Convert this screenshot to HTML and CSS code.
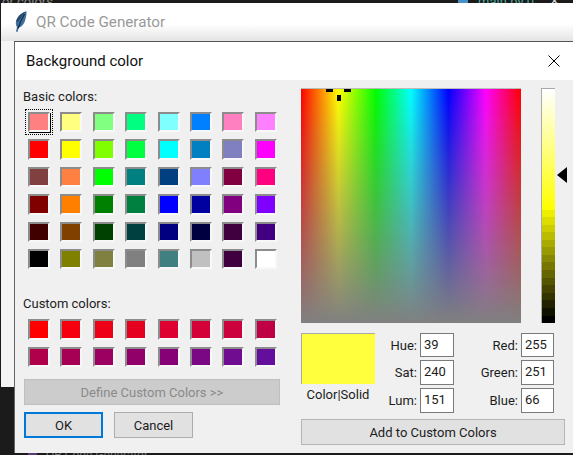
FILE: index.html
```html
<!DOCTYPE html>
<html lang="en">
<head>
<meta charset="utf-8">
<title>Background color</title>
<link rel="stylesheet" href="styles.css">
</head>
<body>
<div class="desk-top"><span class="desk-left">or colors</span><i class="desk-icon"></i><span class="desk-right">main.py 0</span><span class="desk-x">×</span></div>
<div class="parent">
  <div class="parent-title">
    <svg class="feather" width="12" height="22" viewBox="0 0 12 22"><path d="M11.5 0.5C7 1 2.5 5 1 10.5C0.5 13 1 15 2 16L1 20.5L2.6 21L3.6 16.8C7 16 9.5 12.5 10.5 8C11.2 5 11.8 2.5 11.5 0.5Z" fill="#3f6f9c"/><path d="M9.5 3C7 7 5 11.5 3 17.5" stroke="#12263c" stroke-width="1.2" fill="none"/><path d="M11.5 0.5C9.5 1.5 7.5 3.5 6 6L3 11L1.2 10C3 5 7 1.5 11.5 0.5Z" fill="#23466a"/></svg>
    <span>QR Code Generator</span>
  </div>
</div>
<div class="dialog">
  <div class="dialog-title">
    <span>Background color</span>
    <svg class="close" width="12" height="12" viewBox="0 0 12 12"><path d="M0.5 0.5L11.5 11.5M11.5 0.5L0.5 11.5" stroke="#000" stroke-width="1" fill="none"/></svg>
  </div>
  <div class="dialog-body">
    <div class="left">
      <div class="label basic-label">Basic colors:</div>
      <div class="swatches">
        <div class="swatch selected" style="background:#ff8080"></div><div class="swatch" style="background:#ffff80"></div><div class="swatch" style="background:#80ff80"></div><div class="swatch" style="background:#00ff80"></div><div class="swatch" style="background:#80ffff"></div><div class="swatch" style="background:#0080ff"></div><div class="swatch" style="background:#ff80c0"></div><div class="swatch" style="background:#ff80ff"></div>
        <div class="swatch" style="background:#ff0000"></div><div class="swatch" style="background:#ffff00"></div><div class="swatch" style="background:#80ff00"></div><div class="swatch" style="background:#00ff40"></div><div class="swatch" style="background:#00ffff"></div><div class="swatch" style="background:#0080c0"></div><div class="swatch" style="background:#8080c0"></div><div class="swatch" style="background:#ff00ff"></div>
        <div class="swatch" style="background:#804040"></div><div class="swatch" style="background:#ff8040"></div><div class="swatch" style="background:#00ff00"></div><div class="swatch" style="background:#008080"></div><div class="swatch" style="background:#004080"></div><div class="swatch" style="background:#8080ff"></div><div class="swatch" style="background:#800040"></div><div class="swatch" style="background:#ff0080"></div>
        <div class="swatch" style="background:#800000"></div><div class="swatch" style="background:#ff8000"></div><div class="swatch" style="background:#008000"></div><div class="swatch" style="background:#008040"></div><div class="swatch" style="background:#0000ff"></div><div class="swatch" style="background:#0000a0"></div><div class="swatch" style="background:#800080"></div><div class="swatch" style="background:#8000ff"></div>
        <div class="swatch" style="background:#400000"></div><div class="swatch" style="background:#804000"></div><div class="swatch" style="background:#004000"></div><div class="swatch" style="background:#004040"></div><div class="swatch" style="background:#000080"></div><div class="swatch" style="background:#000040"></div><div class="swatch" style="background:#400040"></div><div class="swatch" style="background:#400080"></div>
        <div class="swatch" style="background:#000000"></div><div class="swatch" style="background:#808000"></div><div class="swatch" style="background:#808040"></div><div class="swatch" style="background:#808080"></div><div class="swatch" style="background:#408080"></div><div class="swatch" style="background:#c0c0c0"></div><div class="swatch" style="background:#400040"></div><div class="swatch" style="background:#ffffff"></div>
      </div>
      <div class="label custom-label">Custom colors:</div>
      <div class="swatches custom">
        <div class="swatch" style="background:#ff0000"></div><div class="swatch" style="background:#f60010"></div><div class="swatch" style="background:#ee0018"></div><div class="swatch" style="background:#e60020"></div><div class="swatch" style="background:#de0030"></div><div class="swatch" style="background:#d40038"></div><div class="swatch" style="background:#cc003c"></div><div class="swatch" style="background:#bf0044"></div>
        <div class="swatch" style="background:#b0004c"></div><div class="swatch" style="background:#a60054"></div><div class="swatch" style="background:#9c0060"></div><div class="swatch" style="background:#900068"></div><div class="swatch" style="background:#860076"></div><div class="swatch" style="background:#7a0884"></div><div class="swatch" style="background:#700c90"></div><div class="swatch" style="background:#640f9c"></div>
      </div>
      <button class="btn define" type="button" disabled>Define Custom Colors &gt;&gt;</button>
      <div class="actions">
        <button class="btn ok" type="button">OK</button>
        <button class="btn cancel" type="button">Cancel</button>
      </div>
    </div>
    <div class="right">
      <div class="pickers">
        <div class="spectrum">
          <i class="cross cross-l"></i><i class="cross cross-r"></i><i class="cross cross-b"></i>
        </div>
        <div class="lum"></div>
        <div class="arrow"></div>
      </div>
      <div class="values">
        <div class="preview-col">
          <div class="preview"></div>
          <div class="preview-label">Color|Solid</div>
        </div>
        <div class="fields hsl">
          <label class="field-label">Hue:</label><div class="field">39</div>
          <label class="field-label">Sat:</label><div class="field">240</div>
          <label class="field-label">Lum:</label><div class="field">151</div>
        </div>
        <div class="fields rgb">
          <label class="field-label">Red:</label><div class="field">255</div>
          <label class="field-label">Green:</label><div class="field">251</div>
          <label class="field-label">Blue:</label><div class="field">66</div>
        </div>
      </div>
      <button class="btn add" type="button">Add to Custom Colors</button>
    </div>
  </div>
</div>
<div class="desk-bottom"><i class="bottom-icon"></i><span class="bottom-text">QR Code Generator</span></div>
</body>
</html>
```
FILE: styles.css
```css
* { box-sizing: border-box; }
html, body { margin: 0; padding: 0; }
body {
  width: 573px;
  height: 455px;
  overflow: hidden;
  position: relative;
  background: #1b1b1b;
  font-family: Roboto, "Noto Sans", sans-serif;
  color: #1c1c1c;
}
.desk-top {
  height: 3px;
  overflow: hidden;
  position: relative;
  font-size: 13px;
  line-height: 6px;
}
.desk-left { position: absolute; left: 2px; top: -1px; color: #8a8a8a; }
.desk-icon { position: absolute; left: 458px; top: 0; width: 10px; height: 3px; background: #4a90c8; }
.desk-right { position: absolute; left: 478px; top: -1px; color: #4fa89a; }
.desk-x { position: absolute; left: 551px; top: -2px; color: #ddd; }
.desk-bottom {
  position: absolute;
  left: 0;
  top: 453px;
  width: 573px;
  height: 2px;
  overflow: hidden;
  font-size: 12px;
  line-height: 4px;
}
.bottom-icon { position: absolute; left: 28px; top: 0; width: 9px; height: 2px; background: #5a3a78; }
.bottom-text { position: absolute; left: 46px; top: 0; color: #777; }
.parent {
  position: absolute;
  left: 1px;
  top: 3px;
  width: 572px;
  height: 384px;
  background: #f4f4f4;
}
.parent-title {
  height: 38px;
  display: flex;
  align-items: center;
  gap: 9px;
  padding: 0 0 0 14px;
  background: linear-gradient(#fff 0, #fff 55%, #e4e4e4 100%);
  font-size: 15.2px;
  color: #999;
}
.feather { flex: none; }
.dialog {
  position: absolute;
  left: 14px;
  top: 41px;
  width: 559px;
  height: 412px;
  background: #f0f0f0;
  border-top: 1px solid #555;
  border-left: 1px solid #666;
}
.dialog-title {
  height: 38px;
  background: #fff;
  display: flex;
  align-items: center;
  justify-content: space-between;
  padding: 0 13px 0 11px;
  font-size: 15px;
  color: #111;
}
.dialog-body { display: flex; }
.left { width: 286px; flex: none; padding: 0 0 0 8px; }
.label { font-size: 13px; line-height: 16px; color: #222; }
.basic-label { margin-top: 9px; }
.swatches {
  display: grid;
  grid-template-columns: repeat(8, 22px);
  grid-auto-rows: 20.4px;
  column-gap: 10.4px;
  row-gap: 7px;
  margin: 7px 0 0 5px;
}
.swatch {
  border: 2px solid;
  border-color: #8c8c8c #f8f8f8 #f8f8f8 #8c8c8c;
}
.selected {
  outline: 1px dotted #000;
  outline-offset: 2px;
  box-shadow: 1px 1px 0 #000;
}
.custom-label { margin-top: 27px; }
.custom { margin-top: 7px; }
.btn {
  display: block;
  font-family: inherit;
  font-size: 13px;
  color: #1c1c1c;
  background: #e1e1e1;
  border: 1px solid #adadad;
  padding: 0;
}
.define {
  width: 256px;
  height: 26px;
  margin: 12px 0 0 1px;
  background: #cccccc;
  border-color: #bfbfbf;
  color: #8a8a8a;
}
.actions { display: flex; gap: 11px; margin: 7px 0 0 1px; }
.ok, .cancel { width: 79px; height: 26px; }
.ok { border: 2px solid #0078d7; }
.right { flex: none; width: 265px; padding-top: 8px; }
.pickers { display: flex; position: relative; height: 235px; }
.spectrum {
  width: 220px;
  height: 235px;
  position: relative;
  background:
    linear-gradient(rgba(128,128,128,0), #808080),
    linear-gradient(90deg, #f00, #ff0 17%, #0f0 34%, #0ff 50%, #00f 67%, #f0f 84%, #f00);
  border-top: 1px solid #bbb;
}
.cross { position: absolute; background: #000; }
.cross-l { left: 25px; top: 0; width: 7px; height: 3px; }
.cross-r { left: 43px; top: 0; width: 7px; height: 3px; }
.cross-b { left: 36px; top: 6px; width: 4px; height: 6px; }
.lum {
  width: 14px;
  height: 235px;
  margin-left: 20px;
  border-top: 1px solid #aaa;
  border-left: 1px solid #aaa;
  background: linear-gradient(#fff, #ffff00 51.5%,
    #eeee00 51.5%, #eeee00 54.7%, #dddd00 54.7%, #dddd00 58%, #cccc00 58%, #cccc00 61.2%,
    #bbbb00 61.2%, #bbbb00 64.4%, #aaaa00 64.4%, #aaaa00 67.7%, #999900 67.7%, #999900 70.9%,
    #888800 70.9%, #888800 74.1%, #777700 74.1%, #777700 77.4%, #666600 77.4%, #666600 80.6%,
    #555500 80.6%, #555500 83.8%, #444400 83.8%, #444400 87%, #333300 87%, #333300 90.3%,
    #222200 90.3%, #222200 93.5%, #111100 93.5%, #111100 96.8%, #000 96.8%, #000);
}
.arrow {
  position: absolute;
  left: 256px;
  top: 79px;
  width: 0;
  height: 0;
  border-top: 8px solid transparent;
  border-bottom: 8px solid transparent;
  border-right: 10px solid #000;
}
.values { display: flex; margin-top: 10px; height: 84px; }
.preview-col { width: 74px; flex: none; }
.preview {
  height: 51px;
  background: #ffff3e;
  border-top: 1px solid #aaa;
  border-left: 1px solid #aaa;
}
.preview-label { font-size: 13px; line-height: 16px; text-align: center; margin-top: 3px; }
.fields {
  display: grid;
  grid-template-rows: 24px 25px 25px;
  row-gap: 3px;
  align-items: center;
}
.hsl { grid-template-columns: 42px 34px; margin-left: 3px; }
.rgb { grid-template-columns: 67px 33px; }
.field-label { font-size: 13px; text-align: right; padding-right: 3px; }
.field {
  height: 100%;
  border: 1px solid #7a7a7a;
  background: #fff;
  font-size: 13px;
  line-height: 22px;
  padding-left: 3px;
}
.add { width: 264px; height: 26px; margin-top: 2px; border-color: #b5b5b5; }
```
